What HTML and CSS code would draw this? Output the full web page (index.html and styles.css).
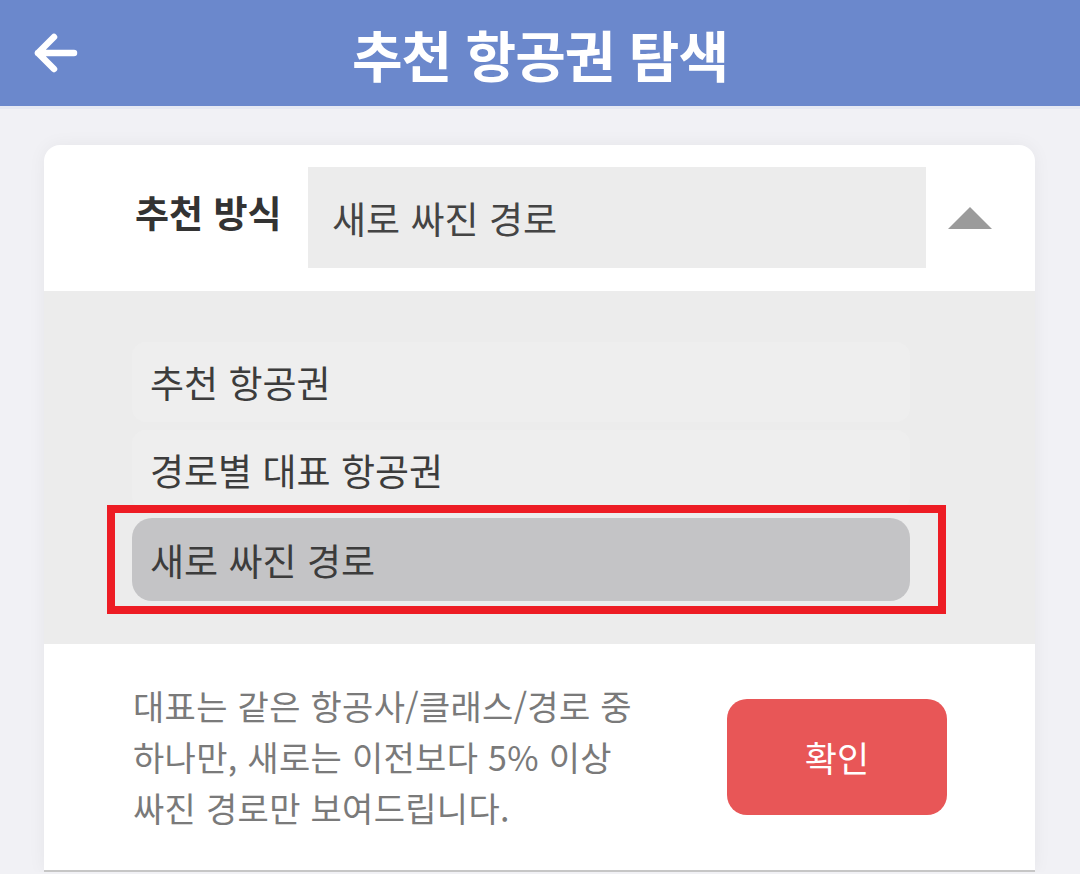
FILE: index.html
```html
<!DOCTYPE html>
<html lang="ko">

<head>
    <title>추천 항공권 탐색</title>
    <meta charset="utf-8">
    <link rel="stylesheet" href="styles.css">
</head>

<body>
    <header class="topbar">
        <button class="back" aria-label="뒤로">
            <svg width="44" height="40" viewBox="0 0 44 40">
                <path d="M40 20 H4 M20 4 L4 20 L20 36" fill="none" stroke="#fff" stroke-width="6.5"
                    stroke-linecap="round" stroke-linejoin="round" />
            </svg>
        </button>
        <h1 class="title">추천 항공권 탐색</h1>
        <div></div>
    </header>

    <main class="page">
        <section class="card">
            <div class="method-row">
                <span class="method-label">추천 방식</span>
                <div class="select-box">새로 싸진 경로</div>
                <span class="caret"></span>
            </div>

            <div class="dropdown">
                <div class="option-list">
                    <div class="option">추천 항공권</div>
                    <div class="option">경로별 대표 항공권</div>
                    <div class="option selected">새로 싸진 경로</div>
                    <div class="highlight"></div>
                </div>
            </div>

            <div class="confirm-row">
                <p class="note">대표는 같은 항공사/클래스/경로 중<br>하나만, 새로는 이전보다 5% 이상<br>싸진 경로만 보여드립니다.</p>
                <button class="confirm">확인</button>
            </div>
        </section>
    </main>
</body>

</html>
```

FILE: styles.css
```css
body {
    margin: 0;
    background-color: #f1f1f5;
    font-family: "Noto Sans CJK KR", "Noto Sans", sans-serif;
    color: #333;
}

.topbar {
    height: 106px;
    background-color: #6b88cc;
    display: grid;
    grid-template-columns: 1fr auto 1fr;
    align-items: center;
    border-bottom: 3px solid #e6e9f3;
}

.back {
    justify-self: start;
    margin-left: 34px;
    padding: 0;
    border: none;
    background: none;
    display: flex;
}

.title {
    margin: 0;
    color: #fff;
    font-size: 55px;
    font-weight: 700;
    letter-spacing: -1px;
}

.page {
    padding: 36px 45px 0 44px;
}

.card {
    background-color: #fff;
    border-radius: 16px 16px 0 0;
    box-shadow: 0 0 18px rgba(0, 0, 0, 0.05);
    overflow: hidden;
    border-bottom: 2px solid #c6c6c6;
}

.method-row {
    display: flex;
    align-items: center;
    padding: 22px 0 23px 91px;
}

.method-label {
    font-size: 37px;
    font-weight: 700;
    color: #333;
    width: 173px;
    padding-bottom: 12px;
}

.select-box {
    width: 594px;
    height: 101px;
    padding-left: 24px;
    background-color: #ececec;
    display: flex;
    align-items: center;
    font-size: 37px;
    color: #444;
}

.caret {
    margin-left: 22px;
    width: 0;
    height: 0;
    border-left: 22px solid transparent;
    border-right: 22px solid transparent;
    border-bottom: 22px solid #9b9b9b;
}

.dropdown {
    background-color: #ececec;
    padding: 51px 0 43px 88px;
}

.option-list {
    position: relative;
    width: 778px;
    display: flex;
    flex-direction: column;
    gap: 8px;
}

.option {
    height: 80px;
    padding-left: 18px;
    display: flex;
    align-items: center;
    background-color: #eeeeee;
    border-radius: 14px;
    font-size: 37px;
    color: #3c3c3c;
}

.option.selected {
    height: 83px;
    background-color: #c4c4c6;
    border-radius: 20px;
}

.highlight {
    position: absolute;
    left: -25px;
    right: -36px;
    bottom: -13px;
    height: 109px;
    box-sizing: border-box;
    border: 8px solid #ed1c24;
}

.confirm-row {
    display: flex;
    align-items: center;
    justify-content: space-between;
    padding: 36px 88px 37px 89px;
}

.note {
    margin: 0;
    font-size: 34px;
    line-height: 51px;
    color: #7a7a7a;
    letter-spacing: 0.3px;
}

.confirm {
    width: 220px;
    height: 116px;
    border: none;
    border-radius: 20px;
    background-color: #e85657;
    color: #fff;
    font-family: inherit;
    font-size: 35px;
}
```
